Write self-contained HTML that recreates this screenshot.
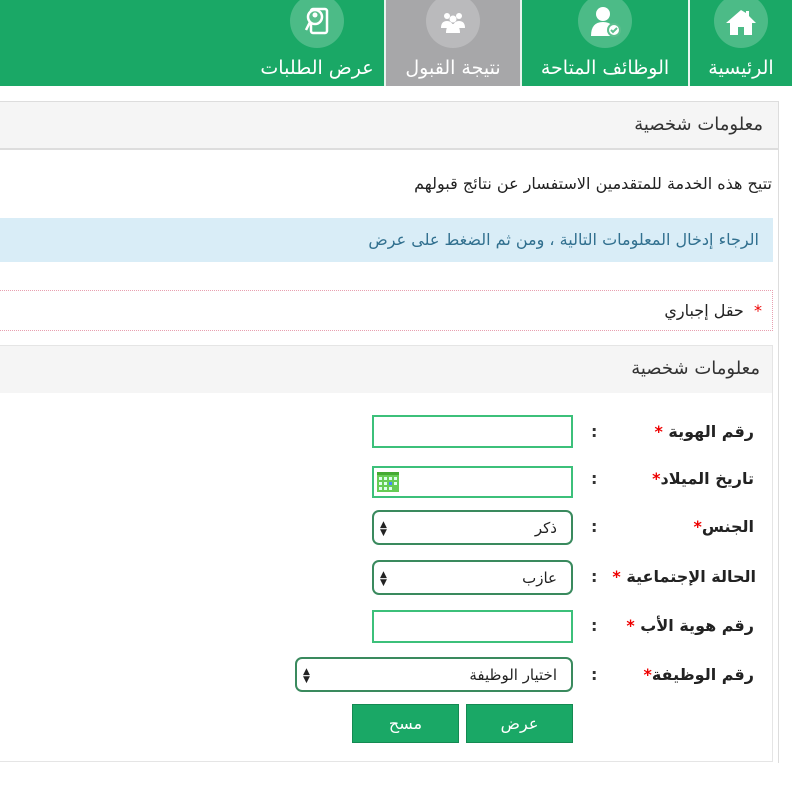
<!DOCTYPE html>
<html><head><meta charset="utf-8"><style>
*{box-sizing:border-box;margin:0;padding:0}
body{width:792px;height:792px;overflow:hidden;background:#fff;font-family:"DejaVu Sans","Liberation Sans",sans-serif;position:relative;color:#333}
.a{position:absolute}
.nav{left:0;top:0;width:792px;height:86px;background:#1aa866}
.tab{top:0;height:86px;color:#fff;font-size:19px;text-align:center}
.tab .c{position:absolute;top:-6px;left:50%;margin-left:-27px;width:54px;height:54px;border-radius:50%;background:rgba(255,255,255,.22)}
.tab .t{position:absolute;bottom:7px;left:0;right:0;direction:rtl}
.sep{top:0;width:2px;height:86px;background:#e8f5ee}
.rtl{direction:rtl}
.lbl{font-weight:bold;font-size:16px;color:#222;direction:rtl;text-align:right;right:38px;width:200px}
.star{color:#e00}
.inp{border:2px solid #3cc07a;background:#fff}
.sel{border:2px solid #3a8a5e;border-radius:7px;background:#fff;font-size:15px;direction:rtl;padding:0 14px;color:#222;display:flex;align-items:center}
.col{left:591px;font-weight:bold;font-size:16px}
.btn{background:#1aa866;border:1px solid #148a52;color:#fff;font-size:16px;display:flex;align-items:center;justify-content:center}
.arr{position:absolute;left:6px;top:9px;font-size:9px;line-height:8px;color:#222}
</style></head><body>
<div class="a nav"></div>
<div class="a tab" style="left:386px;width:134px;background:#a7a7a9"><div class="c"></div>
<svg class="a" style="left:52px;top:10px" width="30" height="24" viewBox="0 0 30 24" fill="#fff"><circle cx="9" cy="6" r="3"/><circle cx="21" cy="6" r="3"/><circle cx="15" cy="9" r="3.5"/><path d="M3 18q0-7 6-7t6 7zM15 18q0-7 6-7t6 7zM8 23q0-9 7-9t7 9z"/></svg>
<div class="t">نتيجة القبول</div></div>
<div class="a sep" style="left:384px"></div>
<div class="a sep" style="left:520px"></div>
<div class="a sep" style="left:688px"></div>
<div class="a tab" style="left:250px;width:134px"><div class="c"></div>
<svg class="a" style="left:53px;top:5px" width="28" height="32" viewBox="0 0 28 32" fill="none" stroke="#fff" stroke-width="2.5"><rect x="8" y="4" width="16" height="24" rx="2"/><circle cx="12" cy="12" r="7" fill="#5cbf8e"/><circle cx="12" cy="10" r="2.5" fill="#fff" stroke="none"/><path d="M7 17l-4 8"/></svg>
<div class="t">عرض الطلبات</div></div>
<div class="a tab" style="left:522px;width:166px"><div class="c"></div>
<svg class="a" style="left:68px;top:4px" width="32" height="34" viewBox="0 0 32 34" fill="#fff"><circle cx="13" cy="10" r="7"/><path d="M1 32q0-14 12-14t12 14z"/><circle cx="24" cy="26" r="6" fill="#fff" stroke="#5cbf8e" stroke-width="2"/><path d="M21 26l2 2 4-4" stroke="#5cbf8e" stroke-width="2" fill="none"/></svg>
<div class="t">الوظائف المتاحة</div></div>
<div class="a tab" style="left:690px;width:102px"><div class="c"></div>
<svg class="a" style="left:35px;top:8px" width="32" height="28" viewBox="0 0 32 28" fill="#fff"><path d="M16 2L1 15h4v12h8v-8h6v8h8V15h4L24 8V3h-3v2z"/></svg>
<div class="t">الرئيسية</div></div>

<div class="a" style="left:-2px;top:101px;width:781px;height:662px;border:1px solid #ddd;border-bottom:none"></div>
<div class="a rtl" style="left:-1px;top:102px;width:779px;height:48px;background:#f5f5f5;border-bottom:2px solid #ddd;font-size:18px;padding-right:15px;line-height:46px;text-align:right">معلومات شخصية</div>
<div class="a rtl" style="right:20px;top:174px;font-size:16px;color:#222">تتيح هذه الخدمة للمتقدمين الاستفسار عن نتائج قبولهم</div>
<div class="a rtl" style="left:0;top:218px;width:773px;height:44px;background:#d9edf7;color:#31708f;font-size:16px;line-height:44px;padding-right:14px;text-align:right">الرجاء إدخال المعلومات التالية ، ومن ثم الضغط على عرض</div>
<div class="a rtl" style="left:-2px;top:290px;width:775px;height:41px;border:1px dotted #e8a0b0;font-size:16px;line-height:40px;padding-right:10px;text-align:right;color:#222"><span class="star">*</span>&nbsp; حقل إجباري</div>
<div class="a" style="left:-2px;top:345px;width:775px;height:417px;border:1px solid #e5e5e5;background:#fff"></div>
<div class="a rtl" style="left:-1px;top:346px;width:773px;height:47px;background:#f5f5f5;font-size:18px;line-height:46px;padding-right:12px;text-align:right">معلومات شخصية</div>

<div class="a lbl" style="top:422px">رقم الهوية <span class="star">*</span></div>
<div class="a col" style="top:422px">:</div>
<div class="a inp" style="left:372px;top:415px;width:201px;height:33px"></div>

<div class="a lbl" style="top:469px">تاريخ الميلاد<span class="star">*</span></div>
<div class="a col" style="top:469px">:</div>
<div class="a inp" style="left:372px;top:466px;width:201px;height:32px"><svg class="a" style="left:3px;top:4px" width="22" height="20" viewBox="0 0 22 20"><rect width="22" height="20" fill="#6c5"/><rect width="22" height="3" fill="#4a3"/><g fill="#dfe"><rect x="2" y="5" width="3" height="3"/><rect x="7" y="5" width="3" height="3"/><rect x="12" y="5" width="3" height="3"/><rect x="17" y="5" width="3" height="3"/><rect x="2" y="10" width="3" height="3"/><rect x="7" y="10" width="3" height="3"/><rect x="12" y="10" width="3" height="3" fill="#48f"/><rect x="17" y="10" width="3" height="3"/><rect x="2" y="15" width="3" height="3"/><rect x="7" y="15" width="3" height="3"/><rect x="12" y="15" width="3" height="3"/></g></svg></div>

<div class="a lbl" style="top:517px">الجنس<span class="star">*</span></div>
<div class="a col" style="top:517px">:</div>
<div class="a sel" style="left:372px;top:510px;width:201px;height:35px">ذكر<span class="arr">▲<br>▼</span></div>

<div class="a lbl" style="top:567px;right:36px;width:260px">الحالة الإجتماعية <span class="star">*</span></div>
<div class="a col" style="top:567px">:</div>
<div class="a sel" style="left:372px;top:560px;width:201px;height:35px">عازب<span class="arr">▲<br>▼</span></div>

<div class="a lbl" style="top:616px">رقم هوية الأب <span class="star">*</span></div>
<div class="a col" style="top:616px">:</div>
<div class="a inp" style="left:372px;top:610px;width:201px;height:33px"></div>

<div class="a lbl" style="top:665px">رقم الوظيفة<span class="star">*</span></div>
<div class="a col" style="top:665px">:</div>
<div class="a sel" style="left:295px;top:657px;width:278px;height:35px">اختيار الوظيفة<span class="arr">▲<br>▼</span></div>

<div class="a btn" style="left:466px;top:704px;width:107px;height:39px">عرض</div>
<div class="a btn" style="left:352px;top:704px;width:107px;height:39px">مسح</div>
</body></html>
